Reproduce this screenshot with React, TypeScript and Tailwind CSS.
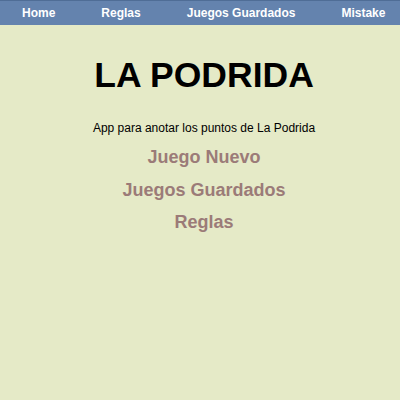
export default function App() {
  const navItems = ['Home', 'Reglas', 'Juegos Guardados', 'Mistake'];
  const links = ['Juego Nuevo', 'Juegos Guardados', 'Reglas'];

  return (
    <div className="min-h-[400px] bg-[#e5eac7] font-['Liberation_Sans',Arial,sans-serif]">
      {/* NAV */}
      <nav className="h-[25px] bg-[#6483ae] border-t border-[#4f6d96] flex items-center gap-[46px] pl-[22px]">
        {navItems.map((item) => (
          <a key={item} href="#" className="text-white font-bold text-[12px] leading-none">
            {item}
          </a>
        ))}
      </nav>

      {/* MAIN */}
      <main className="flex flex-col items-center pl-[8px]">
        <h1 className="mt-[30px] text-[35.5px] font-bold text-black leading-[40px]">LA PODRIDA</h1>
        <p className="mt-[26px] text-[12px] text-black leading-[15px]">App para anotar los puntos de La Podrida</p>
        <div className="mt-[5px] flex flex-col items-center">
          {links.map((l) => (
            <a key={l} href="#" className="text-[18px] font-bold text-[#9b7b78] leading-[32.5px]">
              {l}
            </a>
          ))}
        </div>
      </main>
    </div>
  );
}
